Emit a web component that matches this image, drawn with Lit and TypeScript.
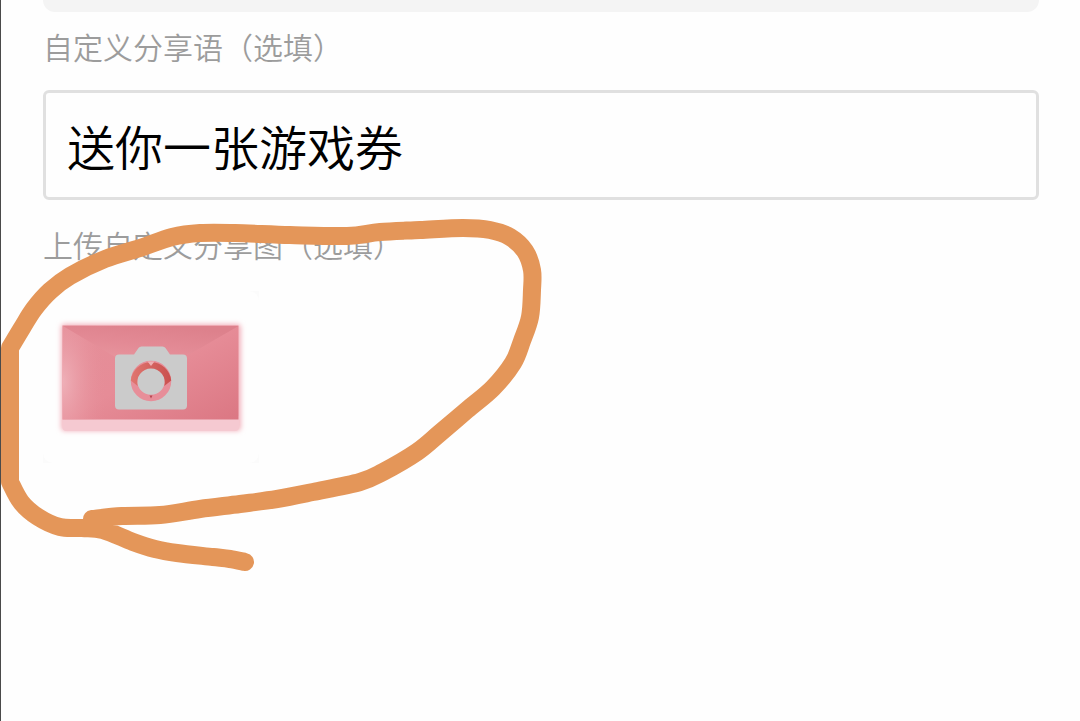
import { LitElement, html, css } from "lit";
import { customElement, state } from "lit/decorators.js";

type Point = [number, number];

const LOOP: Point[] = [
  [92, 519], [122, 516], [160, 515], [200, 509], [240, 504], [277, 499], [313, 492],
  [360, 482], [383, 472], [417, 452], [440, 433], [467, 410], [493, 388], [513, 363],
  [522, 341], [530, 317], [532, 290], [532, 270], [525, 251], [510, 237], [490, 230],
  [463, 228], [420, 230], [380, 232], [347, 236], [290, 235], [235, 233], [200, 233],
  [172, 237], [140, 248], [105, 259], [70, 276], [50, 291], [34, 309], [22, 328], [10, 348],
];

const TAIL: Point[] = [
  [10, 482], [21, 502], [38, 517], [60, 527], [82, 528], [103, 530], [133, 542],
  [155, 549], [177, 553], [213, 557], [230, 559], [245, 562],
];

/** Smooth curve through every point (Catmull-Rom as cubic segments). */
function curve(points: Point[]): string {
  const at = (i: number) => points[Math.max(0, Math.min(points.length - 1, i))];
  let d = "";
  for (let i = 0; i < points.length - 1; i++) {
    const [a, b, c, e] = [at(i - 1), at(i), at(i + 1), at(i + 2)];
    d += `C${b[0] + (c[0] - a[0]) / 6} ${b[1] + (c[1] - a[1]) / 6} ${c[0] - (e[0] - b[0]) / 6} ${c[1] - (e[1] - b[1]) / 6} ${c[0]} ${c[1]}`;
  }
  return d;
}

const SCRIBBLE = `M${LOOP[0].join(" ")}${curve(LOOP)}L${TAIL[0].join(" ")}${curve(TAIL)}`;

@customElement("upload-tile")
export class UploadTile extends LitElement {
  static styles = css`
    :host {
      display: block;
    }
    .tile {
      display: block;
      width: 216px;
      max-width: 100%;
      margin: 0;
      padding: 0;
      border: 0;
      background: #fbfbfb;
      cursor: pointer;
    }
    .art {
      display: block;
      width: 100%;
      border-radius: 10px;
      background: #fefefe;
    }
  `;

  render() {
    return html`
      <button class="tile" type="button" aria-label="上传自定义分享图">
        <svg class="art" viewBox="0 0 216 172" aria-hidden="true">
          <defs>
            <linearGradient id="body" x1="0" y1="0" x2="1" y2="1">
              <stop offset="0" stop-color="#e58f99" />
              <stop offset="0.5" stop-color="#e68c97" />
              <stop offset="1" stop-color="#db7783" />
            </linearGradient>
            <radialGradient id="side" cx="0" cy="0.6" r="1">
              <stop offset="0" stop-color="#efb0b8" />
              <stop offset="1" stop-color="#e68d98" stop-opacity="0" />
            </radialGradient>
            <linearGradient id="flap" x1="0" y1="1" x2="0.6" y2="0">
              <stop offset="0" stop-color="#e8979f" />
              <stop offset="0.5" stop-color="#e38a95" />
              <stop offset="1" stop-color="#dd818c" />
            </linearGradient>
            <linearGradient id="right" x1="0" y1="0" x2="1" y2="0">
              <stop offset="0" stop-color="#e8909b" />
              <stop offset="1" stop-color="#de7e8a" />
            </linearGradient>
            <linearGradient id="ring" x1="0" y1="0" x2="1" y2="0">
              <stop offset="0" stop-color="#e07670" />
              <stop offset="1" stop-color="#c9504e" />
            </linearGradient>
            <filter id="glow" x="-10%" y="-15%" width="120%" height="130%">
              <feGaussianBlur stdDeviation="2.4" />
            </filter>
          </defs>
          <rect x="18" y="33" width="180" height="107" rx="4" fill="#f3b3bd" filter="url(#glow)" />
          <path d="M19.500 125H196V136a4 4 0 0 1-4 4H23.500a4 4 0 0 1-4-4z" fill="#f5c9d1" />
          <rect x="19.500" y="34.500" width="176" height="94" fill="url(#body)" />
          <rect x="19.500" y="34.500" width="44" height="94" fill="url(#side)" />
          <path d="M20 35H195.500L141 66.500H73z" fill="url(#flap)" />
          <circle cx="108" cy="90" r="17" fill="none" />
          <path
            d="M91 63.500L95.500 57Q96.500 55.500 98.500 55.500H119.500Q121.500 55.500 122.500 57L127 63.500H140Q144 63.500 144 67.500V114.500Q144 118.500 140 118.500H76Q72 118.500 72 114.500V67.500Q72 63.500 76 63.500z"
            fill="#cbcbcb"
          />
          <circle cx="108" cy="90" r="17" fill="none" stroke="#e78e99" stroke-width="6.500" />
          <path
            d="M87.800 89.500A20.300 20.300 0 0 1 128.200 89.500L121.300 95A13.800 13.800 0 1 0 94.700 95z"
            fill="url(#ring)"
          />
          <path d="M104.500 70.500L108 75L111.500 70.500z" fill="#edb0b3" />
          <path d="M106.500 104.500H109.500L108 107.500z" fill="#b84650" />
        </svg>
      </button>
    `;
  }
}

@customElement("app-root")
export class AppRoot extends LitElement {
  static styles = css`
    :host {
      display: block;
      position: relative;
      box-sizing: border-box;
      min-height: 100vh;
      overflow: hidden;
      border-left: 1px solid #4a4a4a;
      background: #fefefe;
      font-family: "Noto Sans CJK SC", "Noto Sans", sans-serif;
      font-weight: 350;
    }
    .form {
      padding: 0 41px 0 42px;
    }
    .previous {
      height: 12px;
      border-radius: 0 0 12px 12px;
      background: #f4f4f4;
    }
    .label {
      display: block;
      margin: 14px 0 24px;
      font-size: 30px;
      line-height: 40px;
      color: #9c9c9c;
    }
    .upload-label {
      margin: 24px 0 27px;
    }
    .field {
      display: block;
      box-sizing: border-box;
      width: 100%;
      height: 110px;
      margin: 0;
      padding: 0 21px;
      border: 3px solid #e0e0e0;
      border-radius: 6px;
      outline: none;
      background: #fefefe;
      color: #000;
      font-family: inherit;
      font-size: 48px;
      font-weight: inherit;
    }
    .scribble {
      position: absolute;
      top: 0;
      left: -1px;
      width: 560px;
      height: 600px;
      pointer-events: none;
    }
  `;

  @state() private message = "送你一张游戏券";

  private onInput(e: Event) {
    this.message = (e.target as HTMLInputElement).value;
  }

  render() {
    return html`
      <form class="form">
        <div class="previous"></div>
        <label class="label" for="message">自定义分享语（选填）</label>
        <input class="field" id="message" type="text" .value=${this.message} @input=${this.onInput} />
        <div class="label upload-label">上传自定义分享图（选填）</div>
        <upload-tile></upload-tile>
      </form>
      <svg class="scribble" viewBox="0 0 560 600" aria-hidden="true">
        <path
          d=${SCRIBBLE}
          fill="none"
          stroke="#e49659"
          stroke-width="18"
          stroke-linecap="round"
          stroke-linejoin="round"
        />
      </svg>
    `;
  }
}
